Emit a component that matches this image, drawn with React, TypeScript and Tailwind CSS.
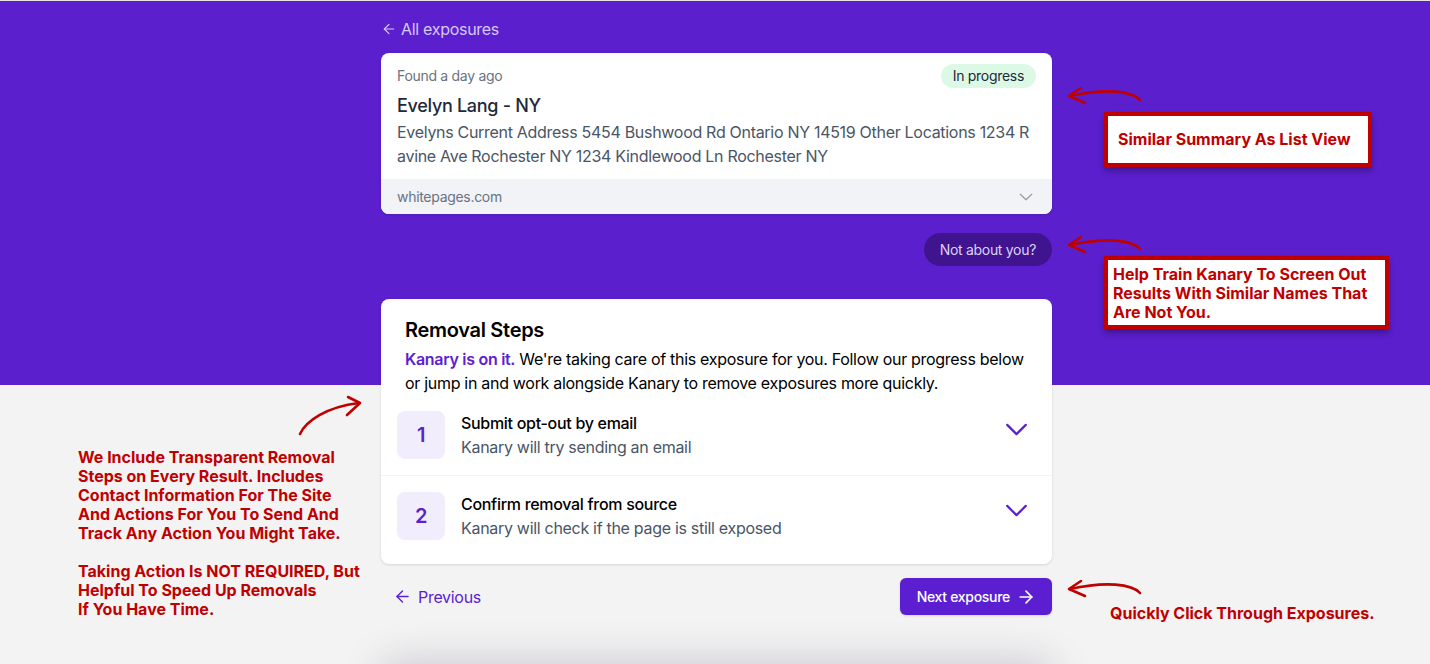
import { ArrowLeft, ArrowRight } from 'lucide-react';

const steps = [
  { n: 1, title: 'Submit opt-out by email', sub: 'Kanary will try sending an email' },
  { n: 2, title: 'Confirm removal from source', sub: 'Kanary will check if the page is still exposed' },
];

function Chevron({ className }: { className?: string }) {
  return (
    <svg viewBox="0 0 24 14" fill="none" className={className}>
      <path d="M2 2l10 10L22 2" stroke="currentColor" strokeWidth="2.4" strokeLinecap="round" strokeLinejoin="round" />
    </svg>
  );
}

// hand-drawn swoosh pointing left
function Swoosh({ className }: { className?: string }) {
  return (
    <svg viewBox="0 0 80 22" width="80" height="22" fill="none" className={className}>
      <path d="M76 15C68 6 42 3 6 11" stroke="#c00000" strokeWidth="2.6" strokeLinecap="round" />
      <path d="M17 3L5 11l16 7" stroke="#c00000" strokeWidth="2.6" strokeLinecap="round" strokeLinejoin="round" />
    </svg>
  );
}

function Note({ children, className }: { children: React.ReactNode; className?: string }) {
  return (
    <div
      className={`absolute border-4 border-[#c00000] bg-white font-bold text-[16px] leading-[19px] text-[#c00000] shadow-[0_4px_6px_rgba(0,0,0,0.3)] ${className}`}
    >
      {children}
    </div>
  );
}

export default function App() {
  return (
    <div className="relative min-h-screen border-t border-[#e4e4e4] bg-[linear-gradient(to_bottom,#5b1fce_384px,#f3f3f3_384px)] font-['Inter',sans-serif] overflow-hidden">
      <div className="ml-[381px] w-[671px] pt-4 tracking-[-0.3px]">
        {/* Back link */}
        <a className="flex items-center gap-1 text-base leading-6 text-[#d6c9f7]">
          <ArrowLeft size={16} strokeWidth={1.75} />
          All exposures
        </a>

        {/* Summary card */}
        <div className="mt-3 overflow-hidden rounded-lg bg-white shadow-sm">
          <div className="px-4 pt-[11px] pb-[11px]">
            <div className="flex items-center justify-between">
              <span className="text-sm leading-5 text-gray-500">Found a day ago</span>
              <span className="rounded-full bg-[#dcf9e6] px-3 py-0.5 text-sm leading-5 text-gray-800">In progress</span>
            </div>
            <h2 className="mt-1 text-lg leading-7 font-medium text-gray-800">Evelyn Lang - NY</h2>
            <p className="break-all text-base leading-6 text-gray-600">
              Evelyns Current Address 5454 Bushwood Rd Ontario NY 14519 Other Locations 1234 Ravine Ave Rochester NY
              1234 Kindlewood Ln Rochester NY
            </p>
          </div>
          <div className="flex h-[35px] items-center justify-between bg-[#f1f3f7] px-4">
            <span className="text-sm leading-5 text-gray-500">whitepages.com</span>
            <Chevron className="mr-[3px] h-[8px] w-[14px] text-gray-400" />
          </div>
        </div>

        <div className="mt-[19px] flex justify-end">
          <button className="h-[33px] rounded-full bg-[#40148f] px-4 text-sm text-[#ddd2fb]">Not about you?</button>
        </div>

        {/* Removal steps */}
        <div className="mt-[33px] rounded-lg bg-white pt-[17px] pb-2 shadow-sm">
          <div className="px-6">
            <h3 className="text-xl leading-7 font-semibold text-black">Removal Steps</h3>
            <p className="mt-[3px] text-base leading-6 text-black">
              <span className="font-semibold text-[#5b21d1]">Kanary is on it.</span> We're taking care of this exposure
              for you. Follow our progress below or jump in and work alongside Kanary to remove exposures more quickly.
            </p>
          </div>
          <div>
            {steps.map((s, i) => (
              <div key={s.n} className={`flex items-start gap-4 py-4 pl-4 pr-6 ${i > 0 ? 'border-t border-gray-100' : ''}`}>
                <div className="flex h-12 w-12 shrink-0 items-center justify-center rounded-lg bg-[#f1edfd] text-xl font-semibold text-[#5b21d1]">
                  {s.n}
                </div>
                <div className="flex-1">
                  <div className="text-base leading-6 font-medium text-black">{s.title}</div>
                  <div className="text-base leading-6 text-gray-600">{s.sub}</div>
                </div>
                <Chevron className="mt-3 h-[13px] w-[23px] text-[#5b21d1]" />
              </div>
            ))}
          </div>
        </div>

        {/* Pager */}
        <div className="mt-[14px] flex items-center justify-between">
          <button className="flex items-center gap-1.5 pl-[12px] text-base leading-6 text-[#5b21d1]">
            <ArrowLeft size={19} strokeWidth={1.75} />
            Previous
          </button>
          <button className="flex h-[37px] items-center gap-1.5 rounded-md bg-[#5b1fd1] pl-[17px] pr-[16px] text-sm font-medium text-white shadow-sm">
            Next exposure
            <ArrowRight size={20} strokeWidth={2} />
          </button>
        </div>

        <div className="mt-[54px] h-40 rounded-2xl bg-[#ece9ee] shadow-[0_-6px_40px_rgba(50,30,70,0.22)]" />
      </div>

      {/* Annotations */}
      <Swoosh className="absolute left-[1064px] top-[84px]" />
      <Note className="left-[1104px] top-[111px] w-[268px] h-[55px] flex items-center pl-[10px]">Similar Summary As List View</Note>

      <Swoosh className="absolute left-[1064px] top-[233px]" />
      <Note className="left-[1104px] top-[255px] w-[285px] h-[73px] pl-[5px] pt-[5px]">
        Help Train Kanary To Screen Out
        <br />
        Results With Similar Names That
        <br />
        Are Not You.
      </Note>

      <svg viewBox="0 0 70 44" width="70" height="44" fill="none" className="absolute left-[296px] top-[394px]">
        <path d="M4 39C10 26 30 12 63 8" stroke="#c00000" strokeWidth="2.6" strokeLinecap="round" />
        <path d="M52 2L64 8 51 20" stroke="#c00000" strokeWidth="2.6" strokeLinecap="round" strokeLinejoin="round" />
      </svg>
      <div className="absolute left-[78px] top-[447px] text-[16px] leading-[19px] font-bold text-[#c00000]">
        We Include Transparent Removal
        <br />
        Steps on Every Result. Includes
        <br />
        Contact Information For The Site
        <br />
        And Actions For You To Send And
        <br />
        Track Any Action You Might Take.
        <br />
        <br />
        Taking Action Is NOT REQUIRED, But
        <br />
        Helpful To Speed Up Removals
        <br />
        If You Have Time.
      </div>

      <Swoosh className="absolute left-[1064px] top-[577px]" />
      <div className="absolute left-[1110px] top-[603px] text-[16px] leading-[19px] font-bold text-[#c00000]">
        Quickly Click Through Exposures.
      </div>
    </div>
  );
}
